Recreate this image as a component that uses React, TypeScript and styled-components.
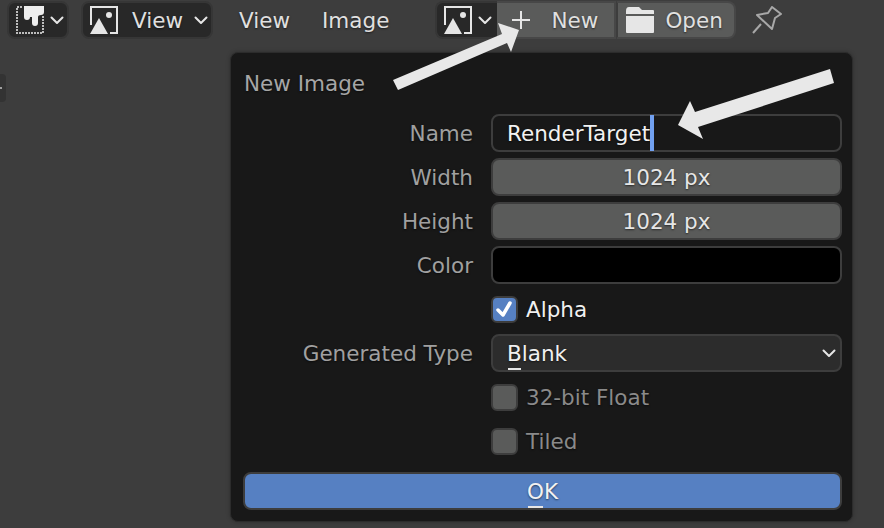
import styled, { createGlobalStyle } from 'styled-components';

const GlobalStyle = createGlobalStyle`
  html, body {
    margin: 0;
    padding: 0;
    background: #3d3d3d;
    overflow: hidden;
  }
  body {
    font-family: "DejaVu Sans", sans-serif;
    font-size: 21.5px;
  }
`;

const Page = styled.div`
  position: relative;
  width: 884px;
  height: 528px;
  overflow: hidden;
  background: #3d3d3d;
  box-sizing: border-box;
  padding: 1px 0 0 7px;
  text-shadow: 0 1px 2px rgba(0, 0, 0, 0.55);
`;

const Toolbar = styled.header`
  display: flex;
  align-items: center;
  height: 38px;
`;

const DarkButton = styled.div<{ $width: number; $left?: number; $gap?: number; $flat?: boolean }>`
  display: flex;
  align-items: center;
  box-sizing: border-box;
  width: ${(p) => p.$width}px;
  height: 38px;
  margin-left: ${(p) => p.$left ?? 0}px;
  padding-left: 7px;
  gap: ${(p) => p.$gap ?? 0}px;
  background: #282828;
  border: 2px solid #363636;
  border-right-width: ${(p) => (p.$flat ? 0 : 2)}px;
  border-radius: ${(p) => (p.$flat ? '8px 0 0 8px' : '8px')};
  color: #e6e6e6;
  flex-shrink: 0;
`;

const MenuItem = styled.span<{ $left: number }>`
  display: flex;
  margin-left: ${(p) => p.$left}px;
  color: #e0e0e0;
  flex-shrink: 0;
`;

const GreyButton = styled.div<{ $width: number; $pad: number; $gap: number; $last?: boolean }>`
  display: flex;
  align-items: center;
  box-sizing: border-box;
  width: ${(p) => p.$width}px;
  height: 38px;
  padding-left: ${(p) => p.$pad}px;
  gap: ${(p) => p.$gap}px;
  background: #5a5b5a;
  border: 2px solid #474747;
  border-left: ${(p) => (p.$last ? '2px solid #3d3d3d' : 'none')};
  border-radius: ${(p) => (p.$last ? '0 8px 8px 0' : '0')};
  color: #e0e0e0;
  flex-shrink: 0;
`;

const PinWrap = styled.div`
  display: flex;
  margin-left: 16px;
`;

const SideTab = styled.div`
  position: absolute;
  left: 0;
  top: 74px;
  width: 6px;
  height: 28px;
  background: #333;
  border-radius: 0 4px 4px 0;
  &::after {
    content: '';
    position: absolute;
    left: 0;
    top: 13px;
    width: 2px;
    height: 2px;
    background: #a0a0a0;
  }
`;

const Dialog = styled.section`
  box-sizing: border-box;
  width: 623px;
  height: 470px;
  margin: 13px 0 0 223px;
  padding: 0 12px 0 13px;
  background: #181818;
  border: 1px solid #2c2c2c;
  border-radius: 8px;
  box-shadow: 0 0 4px rgba(0, 0, 0, 0.25);
`;

const Title = styled.h2`
  margin: 0;
  height: 61px;
  padding: 16px 0 0 0;
  box-sizing: border-box;
  font-size: 21.5px;
  line-height: 30px;
  font-weight: normal;
  color: #a6a6a6;
`;

const Rows = styled.div`
  display: flex;
  flex-direction: column;
  gap: 6px;
`;

const Row = styled.div`
  display: grid;
  grid-template-columns: 229px 351px;
  column-gap: 18px;
  align-items: center;
  height: 38px;
`;

const Label = styled.label`
  text-align: right;
  color: #a0a0a0;
`;

const Field = styled.div`
  display: flex;
  align-items: center;
  box-sizing: border-box;
  height: 38px;
  border-radius: 8px;
  border: 2px solid #3d3d3d;
`;

const TextField = styled(Field)`
  background: #181818;
  padding-left: 14px;
  color: #f2f2f2;
`;

const Caret = styled.span`
  width: 4px;
  height: 36px;
  background: #71a0f0;
`;

const NumberField = styled(Field)`
  justify-content: center;
  background: #5a5b5a;
  color: #e6e6e6;
`;

const ColorField = styled(Field)`
  background: #000;
`;

const SelectField = styled(Field)`
  justify-content: space-between;
  background: #2c2c2c;
  padding: 0 4px 0 14px;
  color: #f0f0f0;
`;

const Mnemonic = styled.span`
  position: relative;
  &::after {
    content: '';
    position: absolute;
    left: 1px;
    right: 1px;
    bottom: -4px;
    height: 2px;
    background: #e6e6e6;
  }
`;

const CheckLine = styled.div`
  display: flex;
  align-items: center;
  gap: 8px;
`;

const Box = styled.div<{ $checked?: boolean }>`
  display: flex;
  align-items: center;
  justify-content: center;
  box-sizing: border-box;
  width: 27px;
  height: 27px;
  border-radius: 6px;
  border: 2px solid #3d3d3d;
  background: ${(p) => (p.$checked ? '#5680c2' : '#5a5b5a')};
`;

const CheckText = styled.span<{ $off?: boolean }>`
  color: ${(p) => (p.$off ? '#8a8a8a' : '#f0f0f0')};
`;

const OkButton = styled.button`
  display: block;
  box-sizing: border-box;
  width: 599px;
  height: 38px;
  margin: 12px 0 0 -1px;
  padding: 0;
  background: #5680c2;
  border: 2px solid #3d3d3d;
  border-radius: 8px;
  color: #f2f2f2;
  font: inherit;
  text-shadow: inherit;
`;

const ArrowLayer = styled.svg`
  position: absolute;
  left: 0;
  top: 0;
  pointer-events: none;
`;

const ImageIcon = () => (
  <svg width="28" height="28" viewBox="0 0 28 28">
    <path d="M1 19V1H27V27H20" fill="none" stroke="#e6e6e6" strokeWidth="2" />
    <path d="M0 28L9 12L18 28Z" fill="#e6e6e6" />
    <circle cx="19" cy="9" r="3" fill="#e6e6e6" />
  </svg>
);

const PaintIcon = () => (
  <svg width="28" height="28" viewBox="0 0 28 28">
    <path d="M6 1H1V27H27V9" fill="none" stroke="#bdbdbd" strokeWidth="2" strokeDasharray="2 1" />
    <path d="M8 0H28V6Q28 9 25 9Q22 9 22 11V17Q22 20 19 20Q16 20 16 17V11H14Q14 14 11 14Q8 14 8 11Z" fill="#eee" />
  </svg>
);

const Chevron = () => (
  <svg width="14" height="14" viewBox="0 0 14 14">
    <path d="M1.500 4.500L7 10L12.500 4.500" fill="none" stroke="#e6e6e6" strokeWidth="2" strokeLinecap="round" strokeLinejoin="round" />
  </svg>
);

const PlusIcon = () => (
  <svg width="18" height="18" viewBox="0 0 18 18">
    <path d="M9 0V18M0 9H18" stroke="#e6e6e6" strokeWidth="2" />
  </svg>
);

const FolderIcon = () => (
  <svg width="28" height="26" viewBox="0 0 28 26">
    <path d="M0 4Q0 0 3 0H13L16 3H27Q28 3 28 4V7H0Z" fill="#e6e6e6" />
    <path d="M0 9H28V25Q28 26 27 26H1Q0 26 0 25Z" fill="#e6e6e6" />
  </svg>
);

const PinIcon = () => (
  <svg width="30" height="28" viewBox="0 0 30 28">
    <path
      d="M5 9L16 7L20 1L29 8L23 12L20 23Z"
      fill="none"
      stroke="#a8a8a8"
      strokeWidth="2"
      strokeLinejoin="round"
    />
    <path d="M1 27L9 18" stroke="#a8a8a8" strokeWidth="2" />
  </svg>
);

const CheckIcon = () => (
  <svg width="19" height="19" viewBox="0 0 19 19">
    <path d="M3 10L8 15L15 3" fill="none" stroke="#fff" strokeWidth="3.500" strokeLinecap="round" strokeLinejoin="round" />
  </svg>
);

function App() {
  return (
    <Page>
      <GlobalStyle />
      <Toolbar>
        <DarkButton $width={62} $gap={6}>
          <PaintIcon />
          <Chevron />
        </DarkButton>
        <DarkButton $width={132} $left={12}>
          <ImageIcon />
          <MenuItem $left={14}>View</MenuItem>
          <MenuItem $left={11}>
            <Chevron />
          </MenuItem>
        </DarkButton>
        <MenuItem $left={26}>View</MenuItem>
        <MenuItem $left={32}>Image</MenuItem>
        <DarkButton $width={62} $left={46} $gap={6} $flat>
          <ImageIcon />
          <Chevron />
        </DarkButton>
        <GreyButton $width={119} $pad={15} $gap={21}>
          <PlusIcon />
          New
        </GreyButton>
        <GreyButton $width={120} $pad={8} $gap={11} $last>
          <FolderIcon />
          Open
        </GreyButton>
        <PinWrap>
          <PinIcon />
        </PinWrap>
      </Toolbar>

      <SideTab />

      <Dialog>
        <Title>New Image</Title>
        <Rows>
          <Row>
            <Label>Name</Label>
            <TextField>
              RenderTarget
              <Caret />
            </TextField>
          </Row>
          <Row>
            <Label>Width</Label>
            <NumberField>1024 px</NumberField>
          </Row>
          <Row>
            <Label>Height</Label>
            <NumberField>1024 px</NumberField>
          </Row>
          <Row>
            <Label>Color</Label>
            <ColorField />
          </Row>
          <Row>
            <span />
            <CheckLine>
              <Box $checked>
                <CheckIcon />
              </Box>
              <CheckText>Alpha</CheckText>
            </CheckLine>
          </Row>
          <Row>
            <Label>Generated Type</Label>
            <SelectField>
              <span>
                <Mnemonic>B</Mnemonic>lank
              </span>
              <Chevron />
            </SelectField>
          </Row>
          <Row>
            <span />
            <CheckLine>
              <Box />
              <CheckText $off>32-bit Float</CheckText>
            </CheckLine>
          </Row>
          <Row>
            <span />
            <CheckLine>
              <Box />
              <CheckText $off>Tiled</CheckText>
            </CheckLine>
          </Row>
        </Rows>
        <OkButton>
          <Mnemonic>O</Mnemonic>K
        </OkButton>
      </Dialog>

      <ArrowLayer width="884" height="528" viewBox="0 0 884 528">
        <polygon points="393,80 502,34 498,23 519,30 511,52 507,43 398,90" fill="#e8e8e8" />
        <polygon points="830,69 834,83 698,127 703,139 678,125 690,101 695,112" fill="#e8e8e8" />
      </ArrowLayer>
    </Page>
  );
}

export default App;
